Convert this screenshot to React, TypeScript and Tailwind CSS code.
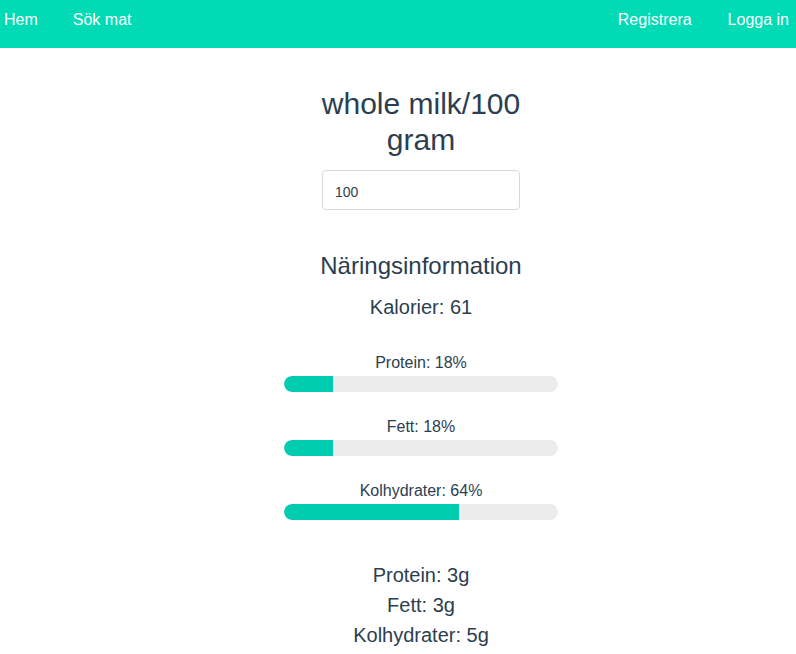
import React from 'react'

const macros = [
  { label: 'Protein', pct: 18 },
  { label: 'Fett', pct: 18 },
  { label: 'Kolhydrater', pct: 64 },
]

export default function App() {
  return (
    <div className="min-h-screen bg-white font-['Liberation_Sans',Arial,sans-serif] text-[#2c3e50]">
      <nav className="h-12 bg-[#00dbb5] flex items-start justify-between pt-2 pl-1 pr-[7px] text-white text-base leading-6">
        <div className="flex gap-[35px]">
          <a href="#">Hem</a>
          <a href="#">Sök mat</a>
        </div>
        <div className="flex gap-9">
          <a href="#">Registrera</a>
          <a href="#">Logga in</a>
        </div>
      </nav>

      <main className="flex flex-col items-center pt-[38px] pl-[46px]">
        <h1 className="w-[210px] text-center text-[30px] leading-9 font-normal">whole milk/100 gram</h1>
        <input
          type="text"
          defaultValue="100"
          className="mt-3 w-[198px] h-10 px-3 pt-[3px] text-sm border border-[#d9d9d9] rounded outline-none text-[#2c3e50]"
        />

        <h2 className="mt-[42px] text-2xl leading-7 font-normal">Näringsinformation</h2>
        <p className="mt-[15px] text-xl leading-6">Kalorier: 61</p>

        <div className="mt-[34px] flex flex-col gap-[25px] w-[274px]">
          {macros.map((m) => (
            <MacroBar key={m.label} label={m.label} pct={m.pct} />
          ))}
        </div>

        <div className="mt-10 flex flex-col items-center text-xl leading-[30px]">
          <p>Protein: 3g</p>
          <p>Fett: 3g</p>
          <p>Kolhydrater: 5g</p>
        </div>
      </main>
    </div>
  )
}

function MacroBar({ label, pct }: { label: string; pct: number }) {
  return (
    <div className="flex flex-col items-center">
      <span className="text-base leading-5">
        {label}: {pct}%
      </span>
      <div className="mt-[3px] w-full h-4 rounded-full bg-[#ececec] overflow-hidden">
        <div className="h-full bg-[#00cdb0] rounded-l-full" style={{ width: `${pct}%` }} />
      </div>
    </div>
  )
}
